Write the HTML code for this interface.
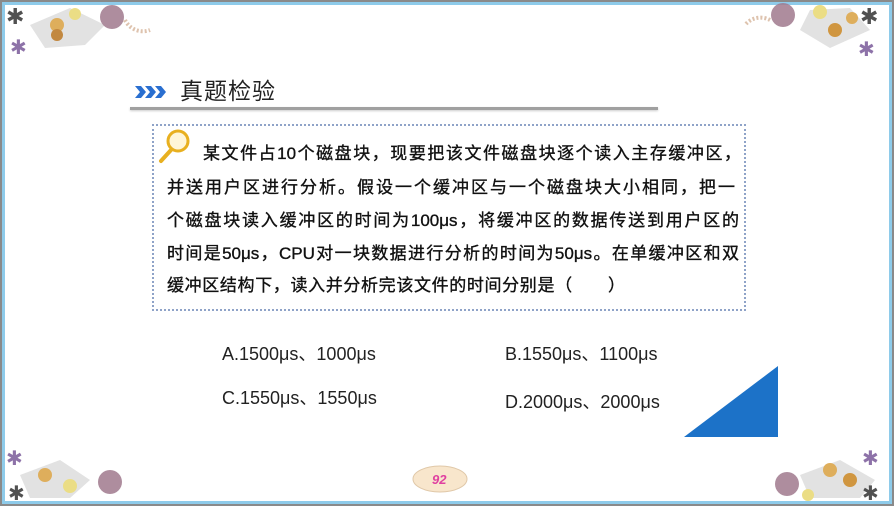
<!DOCTYPE html>
<html><head><meta charset="utf-8"><style>
*{margin:0;padding:0;box-sizing:border-box}
body{width:894px;height:506px;overflow:hidden;background:#fff;font-family:"Liberation Sans","Noto Sans CJK SC",sans-serif;position:relative}
.frame{position:absolute;left:0;top:0;width:894px;height:506px;border:2px solid #8a8a8a}
.inner{position:absolute;left:2px;top:2px;right:2px;bottom:2px;border:3px solid #8ecbea}
.abs{position:absolute}
.title{left:180px;top:72px;font-size:23px;color:#222;letter-spacing:1px}
.uline{left:130px;top:107px;width:528px;height:3px;background:#a0a0a0;box-shadow:0 1px 2px #ccc}
.box{left:152px;top:124px;width:594px;height:187px;border:2px dotted #8fa3c8}
.q{font-size:17px;line-height:33px;color:#111;white-space:nowrap;text-align:justify;text-align-last:justify;-webkit-text-stroke:0.35px #111}
.opt{font-size:18px;color:#222}
</style></head><body>
<div class="frame"></div><div class="inner"></div>

<svg class="abs" style="left:0;top:0" width="894" height="506">
 <g opacity="0.85">
  <polygon points="30,25 70,8 105,25 85,45 45,48" fill="#ddd"/>
  <circle cx="57" cy="25" r="7" fill="#d9a040"/>
  <circle cx="75" cy="14" r="6" fill="#e8d870"/>
  <circle cx="57" cy="35" r="6" fill="#b8741f"/>
  <circle cx="112" cy="17" r="12" fill="#a07a8e"/>
  <path d="M125,20 A20,20 0 0 0 150,30" stroke="#d8b8a0" stroke-width="4" fill="none" stroke-dasharray="2,2"/>
  <text x="6" y="24" font-size="22" fill="#333">✱</text>
  <text x="10" y="54" font-size="20" fill="#7a5a9a">✱</text>
  <polygon points="810,10 850,8 870,30 830,48 800,30" fill="#ddd"/>
  <circle cx="820" cy="12" r="7" fill="#e8d870"/>
  <circle cx="835" cy="30" r="7" fill="#c8841f"/>
  <circle cx="852" cy="18" r="6" fill="#d9a040"/>
  <circle cx="783" cy="15" r="12" fill="#a07a8e"/>
  <path d="M770,20 A20,20 0 0 0 745,25" stroke="#d8b8a0" stroke-width="4" fill="none" stroke-dasharray="2,2"/>
  <text x="860" y="24" font-size="22" fill="#333">✱</text>
  <text x="858" y="56" font-size="20" fill="#7a5a9a">✱</text>
  <polygon points="20,475 60,460 90,480 70,498 30,498" fill="#ddd"/>
  <circle cx="45" cy="475" r="7" fill="#d9a040"/>
  <circle cx="70" cy="486" r="7" fill="#e8d870"/>
  <circle cx="110" cy="482" r="12" fill="#a07a8e"/>
  <text x="6" y="465" font-size="20" fill="#7a5a9a">✱</text>
  <text x="8" y="500" font-size="20" fill="#333">✱</text>
  <polygon points="800,475 840,460 875,480 860,498 810,498" fill="#ddd"/>
  <circle cx="830" cy="470" r="7" fill="#d9a040"/>
  <circle cx="850" cy="480" r="7" fill="#c8841f"/>
  <circle cx="808" cy="495" r="6" fill="#e8d870"/>
  <circle cx="787" cy="484" r="12" fill="#a07a8e"/>
  <text x="862" y="465" font-size="20" fill="#7a5a9a">✱</text>
  <text x="862" y="500" font-size="20" fill="#333">✱</text>
 </g>
 <g fill="#2a6fd0">
  <polygon points="135,86 141,86 146,92 141,98 135,98 140,92"/>
  <polygon points="145,86 151,86 156,92 151,98 145,98 150,92"/>
  <polygon points="155,86 161,86 166,92 161,98 155,98 160,92"/>
 </g>
 <circle cx="178" cy="141" r="10" fill="#fff6d8" stroke="#e8b020" stroke-width="3"/>
 <line x1="171" y1="150" x2="161" y2="161" stroke="#e8b020" stroke-width="4" stroke-linecap="round"/>
 <polygon points="684,437 778,366 778,437" fill="#1c72c8"/>
 <ellipse cx="440" cy="479" rx="27" ry="13" fill="#f8e6cc" stroke="#e0c8a8"/>
 <text x="432" y="484" font-size="13" fill="#e040a0" font-style="italic" font-weight="bold">92</text>
</svg>

<div class="abs title">真题检验</div>
<div class="abs uline"></div>
<div class="abs box"></div>
<div class="abs q" style="left:203px;top:137px;width:538px">某文件占10个磁盘块，现要把该文件磁盘块逐个读入主存缓冲区，</div>
<div class="abs q" style="left:167px;top:171px;width:568px">并送用户区进行分析。假设一个缓冲区与一个磁盘块大小相同，把一</div>
<div class="abs q" style="left:167px;top:204px;width:572px">个磁盘块读入缓冲区的时间为100μs，将缓冲区的数据传送到用户区的</div>
<div class="abs q" style="left:167px;top:237px;width:572px">时间是50μs，CPU对一块数据进行分析的时间为50μs。在单缓冲区和双</div>
<div class="abs q" style="left:167px;top:269px;width:458px">缓冲区结构下，读入并分析完该文件的时间分别是（　　）</div>

<div class="abs opt" style="left:222px;top:340px">A.1500μs、1000μs</div>
<div class="abs opt" style="left:505px;top:340px">B.1550μs、1100μs</div>
<div class="abs opt" style="left:222px;top:384px">C.1550μs、1550μs</div>
<div class="abs opt" style="left:505px;top:388px">D.2000μs、2000μs</div>
</body></html>
